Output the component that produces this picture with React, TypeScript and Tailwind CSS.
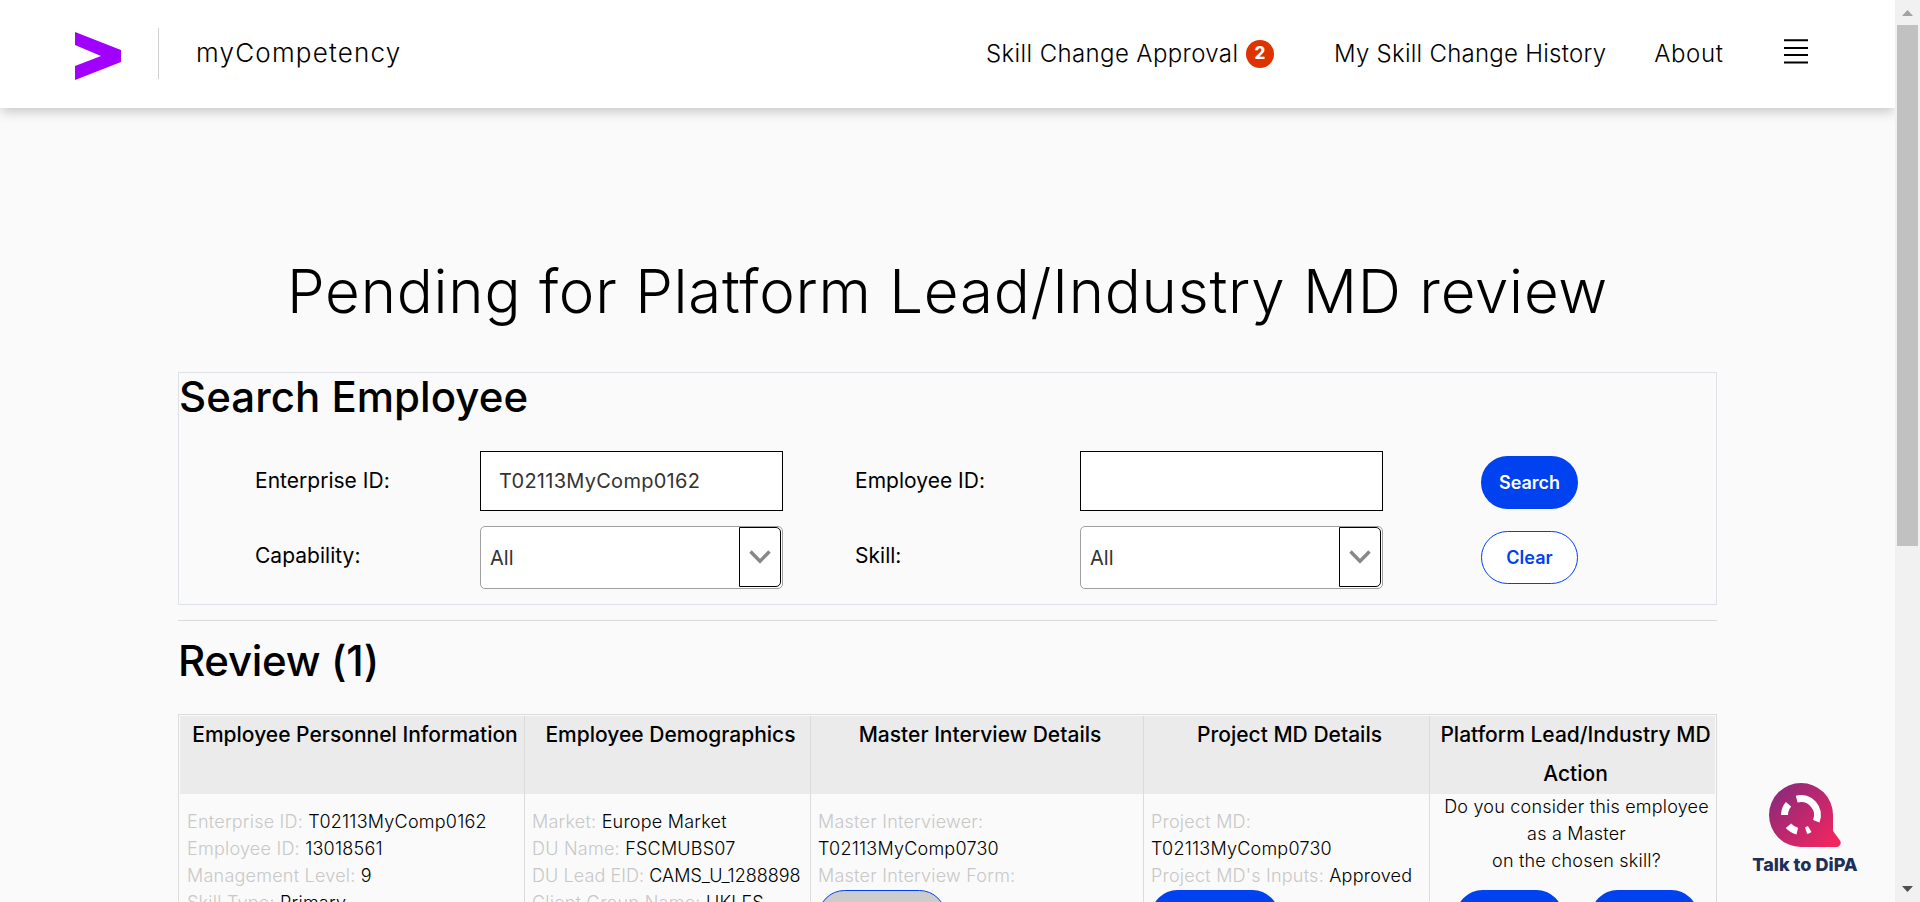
import type { ReactNode } from "react";

function Field({ label, value, tight }: { label: string; value?: string; tight?: boolean }) {
  return (
    <p className={tight ? "tracking-[0.08px] whitespace-nowrap" : "whitespace-nowrap"}>
      <span className="text-[#c8c8c8]">{label}</span>
      {value && <span className={tight ? "tracking-[0px]" : ""}> {value}</span>}
    </p>
  );
}

function SelectBox({ value }: { value: string }) {
  return (
    <div className="flex h-[63px] w-[303px] rounded-[5px] border border-[#a0a0a0] bg-white pr-px pb-px">
      <span className="flex flex-1 items-center pt-px pl-[9px] text-[20px] text-[#333]">{value}</span>
      <span className="flex w-[42px] items-center justify-center rounded-r-[5px] border border-black">
        <svg width="22" height="14" viewBox="0 0 22 14" fill="none" stroke="#888" strokeWidth="3.4">
          <path d="M1.5 1.5 11 11.2 20.5 1.5" />
        </svg>
      </span>
    </div>
  );
}

function Label({ children }: { children: ReactNode }) {
  return <span className="pl-px text-[21px] font-normal tracking-[0.02px] whitespace-nowrap">{children}</span>;
}

function Column({ title, children, className }: { title: ReactNode; children: ReactNode; className: string }) {
  return (
    <div className={`flex h-[190px] shrink-0 flex-col ${className}`}>
      <div className="flex h-[78px] shrink-0 flex-col bg-[#ebebeb] pl-[6px] text-center text-[21px] leading-[39px] font-medium tracking-[0.01px] whitespace-nowrap">
        <div className="-mt-px">{title}</div>
      </div>
      {children}
    </div>
  );
}

function Details({ children }: { children: ReactNode }) {
  return <div className="pt-[14px] pl-[7px] text-[18px] leading-[27px] font-light tracking-[0.23px]">{children}</div>;
}

function Header() {
  return (
    <header className="relative z-10 flex h-[108px] w-[1895px] shrink-0 items-center bg-white pb-[2px] pl-[75px] shadow-[0_5px_11px_-1px_rgba(0,0,0,0.2)]">
      <svg className="mt-[6px]" width="46" height="48" viewBox="0 0 46 48" fill="#a100ff">
        <path d="M0 0 46 18V30L0 48V34L26 24 0 13Z" />
      </svg>
      <div className="mt-px ml-[37px] h-[51px] w-px bg-[#cfcfcf]" />
      <span className="ml-[37px] w-[789px] text-[26px] leading-none font-light tracking-[1.22px]">myCompetency</span>
      <nav className="flex h-full items-center pt-[2px] pl-[1px] text-[24px] font-light whitespace-nowrap">
        <span className="w-[260px] tracking-[0.38px]">Skill Change Approval</span>
        <span className="flex h-7 w-7 items-center justify-center rounded-full bg-[#dc3300] text-[17px] font-extrabold text-white">
          2
        </span>
        <span className="ml-[60px] tracking-[0.25px]">My Skill Change History</span>
        <span className="ml-[48px] tracking-[0.6px]">About</span>
      </nav>
      <svg className="absolute top-[39px] left-[1784px]" width="24" height="25" viewBox="0 0 24 25" fill="#000">
        <path d="M0 .3h24v2H0zM0 8h24v2H0zM0 15h24v2H0zM0 22.5h24v2H0z" />
      </svg>
    </header>
  );
}

function ChatLauncher() {
  return (
    <div className="absolute top-[783px] left-[1745px] z-10 flex w-[120px] flex-col items-center">
      <svg width="72" height="64" viewBox="0 0 72 64" fill="none">
        <defs>
          <linearGradient id="bubble" x1="8" y1="6" x2="64" y2="62" gradientUnits="userSpaceOnUse">
            <stop stopColor="#8c2a7a" />
            <stop offset="1" stopColor="#f32560" />
          </linearGradient>
        </defs>
        <path
          fill="url(#bubble)"
          d="M32 0A32 32 0 0 0 32 64H67.500A4.200 4.200 0 0 0 71 57.500L64 48V32A32 32 0 0 0 32 0Z"
        />
        <g stroke="#fff" strokeWidth="7" transform="translate(32 32)">
          <path d="M-4.300 -15.900A16.500 16.500 0 0 1 15.300 6.200" />
          <path d="M-16.500 0A16.500 16.500 0 0 1 -12.500 -10.800" />
          <path d="M-12.500 10.800A16.500 16.500 0 0 0 -3.700 16.100" />
          <path d="M5.100 15.700A16.500 16.500 0 0 0 8.700 14" />
        </g>
      </svg>
      <span className="mt-[8px] text-[18px] leading-[20px] font-extrabold tracking-[0.03px] whitespace-nowrap text-[#212e55]">
        Talk to DiPA
      </span>
    </div>
  );
}

function Scrollbar() {
  return (
    <div className="flex w-[25px] shrink-0 flex-col items-center bg-[#f1f1f1]">
      <svg className="shrink-0" width="25" height="25" viewBox="0 0 25 25" fill="#a3a3a3">
        <path d="M7 16 12.500 10 18 16Z" />
      </svg>
      <div className="h-[521px] w-[21px] bg-[#c1c1c1]" />
      <svg className="mt-auto shrink-0" width="25" height="25" viewBox="0 0 25 25" fill="#505050">
        <path d="M7 9H18L12.500 15Z" />
      </svg>
    </div>
  );
}

export default function App() {
  return (
    <div className="relative flex h-[902px] w-[1920px] overflow-hidden bg-[#fafafa] font-['Inter',sans-serif] text-black">
      <div className="flex h-[902px] w-[1895px] shrink-0 flex-col overflow-hidden">
        <Header />
        <main className="ml-[178px] flex w-[1539px] flex-col">
          <h1 className="mt-[147px] h-[73px] text-center text-[60px] leading-[73px] font-light tracking-[0.75px] whitespace-nowrap">
            Pending for Platform Lead/Industry MD review
          </h1>

          <section className="mt-[44px] h-[233px] shrink-0 border border-[#dee2e6]">
            <h2 className="h-12 text-[42px] leading-[48px] font-medium tracking-[0.03px]">Search Employee</h2>
            <div className="mt-[30px] grid h-[60px] grid-cols-[226px_303px_71px_226px_303px_98px_97px] items-center pl-[75px]">
              <Label>Enterprise ID:</Label>
              <div className="flex h-[60px] items-center border border-black bg-white pl-[18px] text-[20px] tracking-[0.27px] text-[#333]">
                T02113MyComp0162
              </div>
              <i />
              <Label>Employee ID:</Label>
              <div className="h-[60px] border border-black bg-white" />
              <i />
              <button className="mt-[3px] h-[53px] rounded-full bg-[#0041f0] text-[18px] font-semibold text-white">
                Search
              </button>
            </div>
            <div className="mt-[15px] grid h-[63px] grid-cols-[226px_303px_71px_226px_303px_98px_97px] items-center pl-[75px]">
              <div className="pb-1">
                <Label>Capability:</Label>
              </div>
              <SelectBox value="All" />
              <i />
              <div className="pb-1">
                <Label>Skill:</Label>
              </div>
              <SelectBox value="All" />
              <i />
              <button className="h-[53px] rounded-full border border-[#0041f0] bg-white text-[18px] font-semibold text-[#0041f0]">
                Clear
              </button>
            </div>
          </section>

          <div className="mt-[15px] h-px shrink-0 bg-[#d9d9d9]" />
          <h2 className="mt-4 h-12 shrink-0 text-[42px] leading-[48px] font-medium tracking-[-0.3px]">Review (1)</h2>

          <section className="mt-[29px] flex shrink-0 border border-[#dbdbdb] p-px">
            <Column className="w-[345px] border-r border-[#dbdbdb]" title="Employee Personnel Information">
              <Details>
                <Field label="Enterprise ID:" value="T02113MyComp0162" />
                <Field label="Employee ID:" value="13018561" />
                <Field label="Management Level:" value="9" />
                <Field label="Skill Type:" value="Primary" />
              </Details>
            </Column>
            <Column className="w-[286px] border-r border-[#dbdbdb]" title="Employee Demographics">
              <Details>
                <Field label="Market:" value="Europe Market" />
                <Field label="DU Name:" value="FSCMUBS07" />
                <Field label="DU Lead EID:" value="CAMS_U_1288898" tight />
                <Field label="Client Group Name:" value="UKI FS" />
              </Details>
            </Column>
            <Column className="w-[333px] border-r border-[#dbdbdb]" title="Master Interview Details">
              <Details>
                <Field label="Master Interviewer:" />
                <p>T02113MyComp0730</p>
                <Field label="Master Interview Form:" />
                <div className="mt-px h-[53px] w-[128px] rounded-full border border-[#0041f0] bg-[#ccc]" />
              </Details>
            </Column>
            <Column className="w-[286px] border-r border-[#dbdbdb]" title="Project MD Details">
              <Details>
                <Field label="Project MD:" />
                <p>T02113MyComp0730</p>
                <Field label="Project MD's Inputs:" value="Approved" />
                <div className="mt-px h-[53px] w-[128px] rounded-full bg-[#0041f0]" />
              </Details>
            </Column>
            <Column
              className="w-[285px]"
              title={
                <>
                  Platform Lead/Industry MD
                  <br />
                  Action
                </>
              }
            >
              <div className="-mt-px pl-[8px] text-center text-[18px] leading-[27px] font-light tracking-[0.2px] whitespace-nowrap">
                <p>Do you consider this employee</p>
                <p>as a Master</p>
                <p>on the chosen skill?</p>
                <div className="mt-4 flex justify-center gap-[28px]">
                  <div className="h-[53px] w-[107px] rounded-full bg-[#0041f0]" />
                  <div className="h-[53px] w-[107px] rounded-full bg-[#0041f0]" />
                </div>
              </div>
            </Column>
          </section>
        </main>
      </div>
      <Scrollbar />
      <ChatLauncher />
    </div>
  );
}
